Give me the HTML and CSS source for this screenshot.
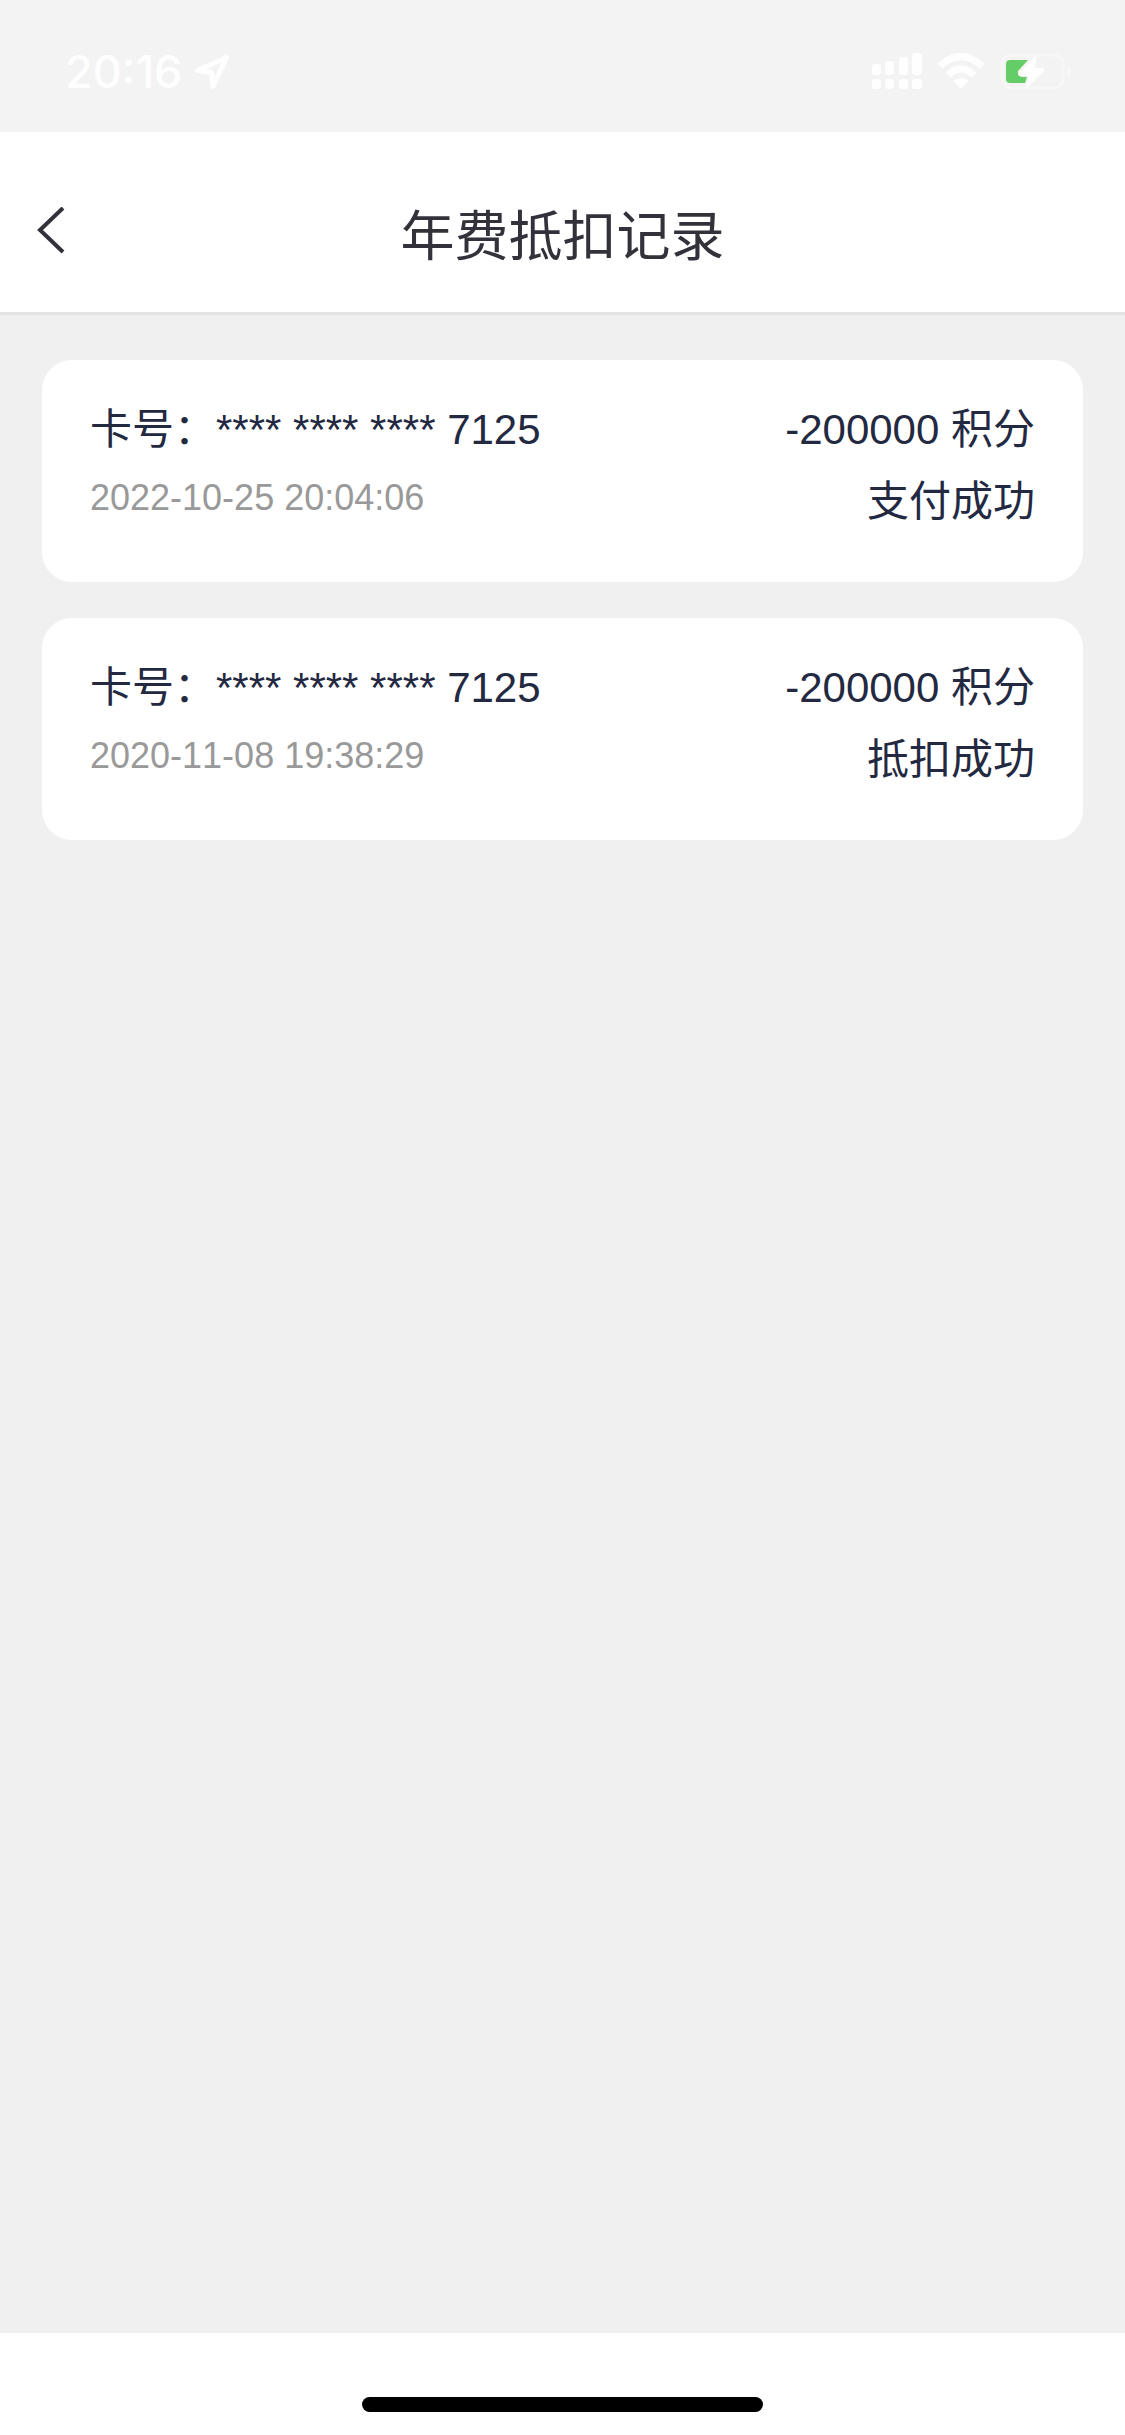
FILE: index.html
```html
<!DOCTYPE html>
<html lang="zh-CN">
<head>
<meta charset="utf-8">
<meta name="viewport" content="width=device-width, initial-scale=1">
<title>年费抵扣记录</title>
<link rel="stylesheet" href="styles.css">
</head>
<body>
<div class="status-bar">
  <div class="status-group">
    <span class="status-time">20:16</span>
    <svg class="status-icon" width="36" height="36" viewBox="0 0 36 36" aria-hidden="true">
      <path d="M32.500 3.500L3.500 16.500L17.500 18.500L19 32.500Z" fill="none" stroke="currentColor" stroke-width="5" stroke-linejoin="round"/>
    </svg>
  </div>
  <div class="status-group status-right">
    <svg class="status-icon" width="50" height="38" viewBox="0 0 50 38" fill="currentColor" aria-hidden="true">
      <rect x="0" y="11" width="9" height="11" rx="3"/>
      <rect x="13" y="8" width="9" height="14" rx="3"/>
      <rect x="27" y="4" width="9" height="18" rx="3"/>
      <rect x="40" y="0" width="10" height="22" rx="4"/>
      <rect x="0" y="26" width="9" height="10" rx="3"/>
      <rect x="13" y="26" width="9" height="10" rx="3"/>
      <rect x="27" y="26" width="9" height="10" rx="3"/>
      <rect x="40" y="26" width="10" height="10" rx="3"/>
    </svg>
    <svg class="status-icon" width="48" height="38" viewBox="0 0 48 38" fill="none" stroke="currentColor" aria-hidden="true">
      <path d="M3 13Q24 -6 45 13" stroke-width="7"/>
      <path d="M11 22Q24 10 37 22" stroke-width="7"/>
      <path d="M24 36L16 28Q24 22 32 28Z" fill="currentColor" stroke="none"/>
    </svg>
    <svg class="status-icon" width="72" height="38" viewBox="0 0 72 38" aria-hidden="true">
      <rect x="2" y="2" width="61" height="33" rx="9" fill="none" stroke="#f7f7f7" stroke-width="3"/>
      <path d="M67 13Q71 15 71 18.500T67 24Z" fill="#f7f7f7"/>
      <path d="M10 7H28L18 18Q17 24 23 24H27L25 30H10Q6 30 6 26V11Q6 7 10 7Z" fill="#65cd67"/>
      <path d="M37 1L19 20Q17 23 21 23H28L26 36L44 18Q46 15 42 15H35Z" fill="currentColor"/>
    </svg>
  </div>
</div>
<header class="nav-bar">
  <button class="back" type="button" aria-label="返回">
    <svg width="30" height="48" viewBox="0 0 30 48" aria-hidden="true">
      <path d="M26 1L3 23L26 45" fill="none" stroke="currentColor" stroke-width="4"/>
    </svg>
  </button>
  <h1 class="title">年费抵扣记录</h1>
</header>
<main class="records">
  <article class="record">
    <div class="record-info">
      <p class="card-number">卡号：**** **** **** 7125</p>
      <time class="date" datetime="2022-10-25T20:04:06">2022-10-25 20:04:06</time>
    </div>
    <div class="record-result">
      <p>-200000 积分</p>
      <p>支付成功</p>
    </div>
  </article>
  <article class="record">
    <div class="record-info">
      <p class="card-number">卡号：**** **** **** 7125</p>
      <time class="date" datetime="2020-11-08T19:38:29">2020-11-08 19:38:29</time>
    </div>
    <div class="record-result">
      <p>-200000 积分</p>
      <p>抵扣成功</p>
    </div>
  </article>
</main>
<footer class="home-area"><div class="home-indicator"></div></footer>
</body>
</html>
```
FILE: styles.css
```css
* {
  box-sizing: border-box;
}

body {
  display: flex;
  flex-direction: column;
  min-height: 100vh;
  margin: 0;
  background: #f0f0f0;
  color: #232941;
  font-family: "Liberation Sans", "Noto Sans CJK SC", sans-serif;
  font-kerning: none;
}

h1,
p {
  margin: 0;
}

.status-bar {
  display: flex;
  align-items: center;
  justify-content: space-between;
  height: 132px;
  padding: 11px 53px 0 65px;
  background: #f3f3f3;
  color: #fefefe;
}

.status-group {
  display: flex;
  align-items: center;
  gap: 12px;
}

.status-right {
  gap: 15px;
}

.status-icon {
  display: block;
}

.status-time {
  font-family: Inter, sans-serif;
  font-size: 45px;
  font-weight: 500;
  line-height: 48px;
}

.nav-bar {
  display: grid;
  grid-template-columns: 120px 1fr 120px;
  align-items: center;
  height: 183px;
  padding-top: 30px;
  border-bottom: 3px solid #e3e3e3;
  background: #fff;
  color: #33323b;
}

.back {
  display: flex;
  align-items: center;
  height: 96px;
  padding: 0 0 12px 37px;
  border: 0;
  background: none;
  color: inherit;
}

.title {
  font-size: 54px;
  font-weight: 400;
  line-height: 72px;
  text-align: center;
}

.records {
  display: flex;
  flex: 1;
  flex-direction: column;
  gap: 36px;
  padding: 45px 42px;
}

.record {
  display: flex;
  justify-content: space-between;
  padding: 34px 48px 44px;
  border-radius: 30px;
  background: #fff;
}

.card-number {
  font-size: 42px;
  line-height: 72px;
}

.date {
  display: block;
  color: #999;
  font-size: 36px;
  line-height: 64px;
}

.record-result {
  font-size: 42px;
  line-height: 72px;
  text-align: right;
}

.home-area {
  display: flex;
  justify-content: center;
  height: 102px;
  padding-top: 64px;
  background: #fff;
}

.home-indicator {
  width: 401px;
  height: 15px;
  border-radius: 8px;
  background: #000;
}
```
